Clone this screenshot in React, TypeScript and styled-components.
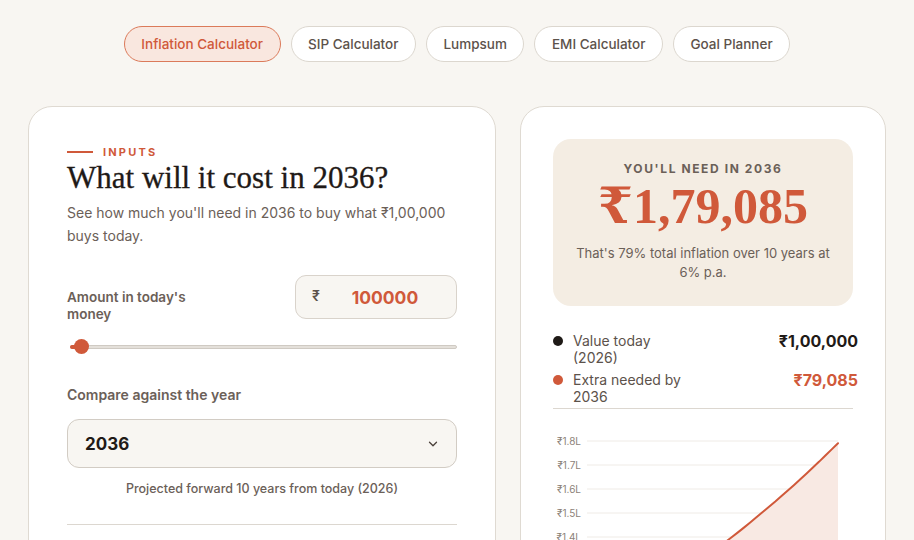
import styled, { createGlobalStyle } from "styled-components";
import { ChevronDown } from "lucide-react";

const ACCENT = "#d0593a";
const INK = "#1f1a17";
const MUTED = "#6b6058";

const GlobalStyle = createGlobalStyle`
  * { box-sizing: border-box; }
  body {
    margin: 0;
    background: #f8f6f2;
    font-family: Inter, "Noto Sans", sans-serif;
    color: ${INK};
  }
`;

const tabs = ["Inflation Calculator", "SIP Calculator", "Lumpsum", "EMI Calculator", "Goal Planner"];
const yLabels = ["₹1.8L", "₹1.7L", "₹1.6L", "₹1.5L", "₹1.4L", "₹1.3L", "₹1.2L", "₹1.1L", "₹1.0L"];

// chart geometry
const X0 = 34;
const X1 = 285;
const TOP = 20;
const STEP = 24;
const yFor = (v: number) => TOP + (1.8 - v) * 10 * STEP;

function buildCurve() {
  const pts: string[] = [];
  for (let i = 0; i <= 40; i++) {
    const t = (i / 40) * 10;
    const x = X0 + ((X1 - X0) * t) / 10;
    const y = yFor(Math.pow(1.06, t));
    pts.push(`${x.toFixed(1)},${y.toFixed(1)}`);
  }
  return pts;
}

function App() {
  const pts = buildCurve();
  const line = "M" + pts.join(" L");
  const area = `${line} L${X1},${yFor(1.0)} L${X0},${yFor(1.0)} Z`;

  return (
    <>
      <GlobalStyle />
      <Page>
        <TabRow>
          {tabs.map((t, i) => (
            <Tab key={t} $active={i === 0}>
              {t}
            </Tab>
          ))}
        </TabRow>

        <Columns>
          <Card $pad={38}>
            <Eyebrow>INPUTS</Eyebrow>
            <Title>What will it cost in 2036?</Title>
            <Lead>See how much you'll need in 2036 to buy what ₹1,00,000 buys today.</Lead>

            <AmountRow>
              <FieldLabel>Amount in today's money</FieldLabel>
              <AmountBox>
                <Rupee>₹</Rupee>
                <AmountValue>100000</AmountValue>
              </AmountBox>
            </AmountRow>

            <Slider>
              <SliderFill />
              <SliderThumb />
            </Slider>

            <SectionLabel>Compare against the year</SectionLabel>
            <Select>
              <span>2036</span>
              <ChevronDown size={14} strokeWidth={2.2} color="#4a403a" />
            </Select>
            <Hint>Projected forward 10 years from today (2026)</Hint>
            <Divider $gap={27} />
          </Card>

          <Card $pad={32}>
            <Hero>
              <HeroKicker>YOU'LL NEED IN 2036</HeroKicker>
              <HeroAmount>₹1,79,085</HeroAmount>
              <HeroNote>That's 79% total inflation over 10 years at 6% p.a.</HeroNote>
            </Hero>

            <Legend>
              <LegendRow>
                <Dot $color={INK} />
                <LegendText>Value today (2026)</LegendText>
                <LegendValue $color={INK}>₹1,00,000</LegendValue>
              </LegendRow>
              <LegendRow>
                <Dot $color={ACCENT} />
                <LegendText>Extra needed by 2036</LegendText>
                <LegendValue $color={ACCENT}>₹79,085</LegendValue>
              </LegendRow>
            </Legend>
            <Divider $gap={3} />

            <ChartSvg width={300} height={230} viewBox="0 0 300 230">
              {yLabels.map((l, i) => (
                <g key={l}>
                  <line x1={X0} x2={X1} y1={TOP + i * STEP} y2={TOP + i * STEP} stroke="#efebe6" strokeWidth={1} />
                  <text
                    x={28}
                    y={TOP + i * STEP + 3.5}
                    textAnchor="end"
                    fontSize={10}
                    fill="#8c8279"
                    fontFamily="Inter, sans-serif"
                  >
                    {l}
                  </text>
                </g>
              ))}
              <path d={area} fill="#f8e9e3" />
              <path d={line} fill="none" stroke={ACCENT} strokeWidth={2} strokeLinecap="round" />
            </ChartSvg>
          </Card>
        </Columns>
      </Page>
    </>
  );
}

export default App;

const Page = styled.div`
  padding: 26px 28px 40px;
`;

const TabRow = styled.div`
  display: flex;
  justify-content: center;
  gap: 10px;
  margin-bottom: 44px;
`;

const Tab = styled.button<{ $active?: boolean }>`
  height: 36px;
  padding: 0 16.5px;
  border-radius: 999px;
  font-family: Inter, sans-serif;
  font-size: 13.5px;
  font-weight: 500;
  cursor: pointer;
  border: 1px solid ${(p) => (p.$active ? "#db7a5a" : "#dcd7cf")};
  background: ${(p) => (p.$active ? "#f9e7df" : "#ffffff")};
  color: ${(p) => (p.$active ? ACCENT : "#5c524b")};
`;

const Columns = styled.div`
  display: grid;
  grid-template-columns: 468px 366px;
  gap: 24px;
  justify-content: center;
  align-items: start;
`;

const Card = styled.div<{ $pad: number }>`
  background: #ffffff;
  border: 1px solid #dfdad2;
  border-radius: 24px;
  padding: ${(p) => p.$pad}px;
  min-height: 600px;
`;

const Eyebrow = styled.div`
  display: flex;
  align-items: center;
  gap: 10px;
  font-size: 11px;
  line-height: 14px;
  font-weight: 700;
  letter-spacing: 2.2px;
  color: ${ACCENT};

  &::before {
    content: "";
    width: 26px;
    height: 1.5px;
    background: ${ACCENT};
  }
`;

const Title = styled.h1`
  margin: 1px 0 0;
  font-family: "Liberation Serif", "DejaVu Serif", serif;
  font-weight: 400;
  font-size: 31px;
  line-height: 36px;
  color: ${INK};
  -webkit-text-stroke: 0.3px ${INK};
`;

const Lead = styled.p`
  margin: 5px 0 0;
  font-size: 14px;
  line-height: 23px;
  color: ${MUTED};
`;

const AmountRow = styled.div`
  display: flex;
  justify-content: space-between;
  align-items: flex-start;
  margin-top: 28px;
`;

const FieldLabel = styled.div`
  width: 150px;
  margin-top: 14px;
  font-size: 13.5px;
  line-height: 17px;
  font-weight: 600;
  color: ${MUTED};
`;

const AmountBox = styled.div`
  width: 162px;
  height: 44px;
  display: flex;
  align-items: center;
  padding: 0 16px;
  background: #f8f6f2;
  border: 1px solid #d9d3cb;
  border-radius: 11px;
`;

const Rupee = styled.span`
  font-size: 14px;
  font-weight: 600;
  color: #5c524b;
  margin-top: -4px;
`;

const AmountValue = styled.span`
  flex: 1;
  text-align: center;
  padding-left: 10px;
  font-size: 17.5px;
  font-weight: 700;
  color: ${ACCENT};
`;

const Slider = styled.div`
  position: relative;
  margin: 22px 0 0 3px;
  height: 4px;
  border-radius: 2px;
  background: #e4e0da;
  border: 1px solid #cfcac3;
`;

const SliderFill = styled.div`
  position: absolute;
  left: -1px;
  top: -1px;
  width: 12px;
  height: 4px;
  border-radius: 2px;
  background: ${ACCENT};
`;

const SliderThumb = styled.div`
  position: absolute;
  left: 3px;
  top: -7px;
  width: 15px;
  height: 15px;
  border-radius: 50%;
  background: ${ACCENT};
`;

const SectionLabel = styled.div`
  margin-top: 37px;
  font-size: 14px;
  line-height: 18px;
  font-weight: 600;
  color: ${MUTED};
`;

const Select = styled.div`
  margin-top: 15px;
  height: 49px;
  display: flex;
  align-items: center;
  justify-content: space-between;
  padding: 0 16px 0 17px;
  background: #f8f6f2;
  border: 1px solid #d2ccc4;
  border-radius: 12px;
  font-size: 17px;
  font-weight: 700;
  color: ${INK};
`;

const Hint = styled.div`
  margin-top: 13px;
  text-align: center;
  font-size: 12.5px;
  line-height: 16px;
  font-weight: 500;
  color: ${MUTED};
`;

const Divider = styled.div<{ $gap: number }>`
  height: 1px;
  background: #dcd7d0;
  margin-top: ${(p) => p.$gap}px;
`;

const Hero = styled.div`
  background: #f4ede3;
  border-radius: 18px;
  padding: 22px 18px 24px;
  text-align: center;
`;

const HeroKicker = styled.div`
  font-size: 12px;
  line-height: 16px;
  font-weight: 700;
  letter-spacing: 1.6px;
  color: ${MUTED};
`;

const HeroAmount = styled.div`
  margin-top: 2px;
  font-family: "Liberation Serif", "DejaVu Serif", serif;
  font-size: 50px;
  line-height: 54px;
  font-weight: 700;
  color: ${ACCENT};
`;

const HeroNote = styled.div`
  margin-top: 11px;
  font-size: 13px;
  line-height: 19px;
  color: ${MUTED};
`;

const Legend = styled.div`
  margin: 26px -5px 0 0;
  display: flex;
  flex-direction: column;
  gap: 5px;
`;

const LegendRow = styled.div`
  display: grid;
  grid-template-columns: 10px 116px 1fr;
  column-gap: 10px;
  align-items: start;
`;

const Dot = styled.span<{ $color: string }>`
  width: 10px;
  height: 10px;
  margin-top: 4px;
  border-radius: 50%;
  background: ${(p) => p.$color};
`;

const LegendText = styled.div`
  font-size: 14px;
  line-height: 17px;
  color: #5c524b;
`;

const LegendValue = styled.div<{ $color: string }>`
  text-align: right;
  font-size: 16px;
  line-height: 18px;
  font-weight: 700;
  color: ${(p) => p.$color};
`;

const ChartSvg = styled.svg`
  display: block;
  margin-top: 12px;
`;
